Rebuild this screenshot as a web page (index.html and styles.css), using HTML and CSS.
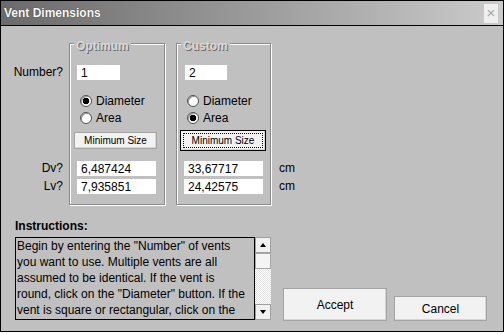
FILE: index.html
```html
<!DOCTYPE html>
<html lang="en">
<head>
  <meta charset="UTF-8" />
  <title>Vent Dimensions</title>
  <link rel="stylesheet" href="styles.css">
</head>
<body>

  <div class="window">
    <div class="titlebar">
      <span class="title">Vent Dimensions</span>
      <span class="close">&times;</span>
    </div>

    <div class="form">
      <!-- group frames span all the rows -->
      <div class="group c-opt"><span class="legend">Optimum</span></div>
      <div class="group c-cus"><span class="legend">Custom</span></div>

      <div class="row-label c-label r-number">Number?</div>
      <input class="field num-opt c-opt r-number" value="1">
      <input class="field num-cus c-cus r-number" value="2">

      <div class="radio c-opt r-dia"><span class="dot checked"></span>Diameter</div>
      <div class="radio c-opt r-area"><span class="dot"></span>Area</div>
      <div class="radio c-cus r-dia"><span class="dot"></span>Diameter</div>
      <div class="radio c-cus r-area"><span class="dot checked"></span>Area</div>

      <button class="btn min-opt c-opt r-btn">Minimum Size</button>
      <button class="btn min-cus c-cus r-btn">Minimum Size</button>

      <div class="row-label c-label r-dv">Dv?</div>
      <input class="field size c-opt r-dv" value="6,487424">
      <input class="field size c-cus r-dv" value="33,67717">
      <div class="unit c-unit r-dv">cm</div>

      <div class="row-label c-label r-lv">Lv?</div>
      <input class="field size c-opt r-lv" value="7,935851">
      <input class="field size c-cus r-lv" value="24,42575">
      <div class="unit c-unit r-lv">cm</div>
    </div>

    <div class="bottom">
      <div class="instructions">
        <div class="inst-title">Instructions:</div>
        <div class="textbox">
          <div class="text">Begin by entering the "Number" of vents you want to use. Multiple vents are all assumed to be identical. If the vent is round, click on the "Diameter" button. If the vent is square or rectangular, click on the</div>
          <div class="scrollbar">
            <div class="sb-btn"><span class="arrow up"></span></div>
            <div class="sb-thumb"></div>
            <div class="sb-track"></div>
            <div class="sb-btn"><span class="arrow down"></span></div>
          </div>
        </div>
      </div>
      <button class="btn accept">Accept</button>
      <button class="btn cancel">Cancel</button>
    </div>
  </div>

</body>
</html>
```

FILE: styles.css
```css
* {
  box-sizing: border-box;
}

body {
  margin: 0;
  font-family: "Liberation Sans", Arial, sans-serif;
  font-size: 12px;
  color: #000;
  background: #fff;
}

.window {
  width: 504px;
  border: 1px solid #000;
  background: #c0c0c0;
}

.titlebar {
  height: 25px;
  border-bottom: 1px solid #000;
  background: linear-gradient(to right, #6a6a6a, #cbcbcb);
  display: flex;
  align-items: center;
  justify-content: space-between;
  padding: 0 5px 0 3px;
}

.title {
  font-weight: bold;
  color: #fafafa;
  text-shadow: 0 0 1px #222;
  line-height: 14px;
}

.close {
  width: 14px;
  height: 19px;
  background: #efefef;
  color: #a8a8a8;
  font-size: 15px;
  line-height: 18px;
  text-align: center;
}

/* top part: labels | optimum | custom | units */
.form {
  display: grid;
  grid-template-columns: 68px 96px 11px 95px 1fr;
  grid-template-rows: 22px 15px 13px 16px 17px 4px 21px 10px 15px 3px 15px 11px;
  padding-top: 17px;
}

.group {
  grid-row: 1 / 13;
  border: 1px solid #8a8a8a;
  box-shadow: inset 1px 1px #fff, 1px 1px #fff;
}

.legend {
  display: inline-block;
  vertical-align: top;
  margin: -5px 0 0 4px;
  padding: 0 2px;
  background: #c0c0c0;
  font-weight: bold;
  line-height: 14px;
  color: #d8d8d8;
  text-shadow: 1px 1px 0 #6c6c6c;
}

.c-label { grid-column: 1; }
.c-opt { grid-column: 2; }
.c-cus { grid-column: 4; }
.c-unit { grid-column: 5; }

.r-number { grid-row: 2; }
.r-dia { grid-row: 4; }
.r-area { grid-row: 5; }
.r-btn { grid-row: 7; }
.r-dv { grid-row: 9; }
.r-lv { grid-row: 11; }

.row-label {
  text-align: right;
  padding-right: 6px;
  line-height: 15px;
}

.unit {
  padding-left: 8px;
  line-height: 15px;
}

.field {
  justify-self: start;
  height: 15px;
  border: 0;
  padding: 0 0 0 4px;
  margin: 0 0 0 8px;
  background: #fff;
  font: inherit;
  color: #000;
  outline: none;
}

.num-opt { width: 43px; }
.num-cus { width: 42px; margin-left: 9px; }
.size { width: 79px; }

.radio {
  display: flex;
  align-items: center;
  gap: 4px;
  margin-left: 11px;
}

.dot {
  width: 12px;
  height: 12px;
  border-radius: 50%;
  border: 1px solid #505050;
  background: #fff;
  box-shadow: inset 1px 1px #9a9a9a;
}

.dot.checked {
  background: radial-gradient(circle, #000 0 3px, #fff 3.6px);
}

.btn {
  padding: 0;
  font: inherit;
  color: #000;
  text-align: center;
  background: #f2f2f2;
  border: 1px solid #a4a4a4;
  box-shadow: inset -1px -1px #d6d6d6;
  justify-self: start;
}

.min-opt,
.min-cus {
  font-size: 10px;
}

.min-opt {
  width: 83px;
  height: 17px;
  margin-left: 5px;
  align-self: center;
}

.min-cus {
  width: 86px;
  height: 21px;
  margin-left: 4px;
  border: 1px solid #000;
  outline: 1px dotted #000;
  outline-offset: -4px;
}

/* bottom part: instructions and dialog buttons */
.bottom {
  display: flex;
  align-items: flex-end;
  padding: 14px 0 10px 14px;
}

.instructions {
  width: 256px;
  margin-bottom: 1px;
}

.inst-title {
  font-weight: bold;
  line-height: 14px;
  margin-bottom: 4px;
}

.textbox {
  display: flex;
  height: 83px;
}

.text {
  width: 240px;
  border: 1px solid #000;
  padding: 0 6px 0 1px;
  line-height: 16px;
  overflow: hidden;
}

.scrollbar {
  width: 16px;
  display: flex;
  flex-direction: column;
}

.sb-btn {
  height: 16px;
  background: #f0f0f0;
  border: 1px solid #a0a0a0;
  display: flex;
  align-items: center;
  justify-content: center;
}

.arrow {
  width: 0;
  height: 0;
  border-left: 3px solid transparent;
  border-right: 3px solid transparent;
}

.arrow.up { border-bottom: 4px solid #000; }
.arrow.down { border-top: 4px solid #000; }

.sb-thumb {
  height: 16px;
  background: #f4f4f4;
  border: 1px solid #a8a8a8;
}

.sb-track {
  flex: 1;
  background: repeating-conic-gradient(#fff 0 25%, #e2e2e2 0 50%) 0 0 / 2px 2px;
}

.accept {
  width: 104px;
  height: 33px;
  margin-left: 12px;
}

.cancel {
  width: 93px;
  height: 25px;
  margin-left: 7px;
}
```
